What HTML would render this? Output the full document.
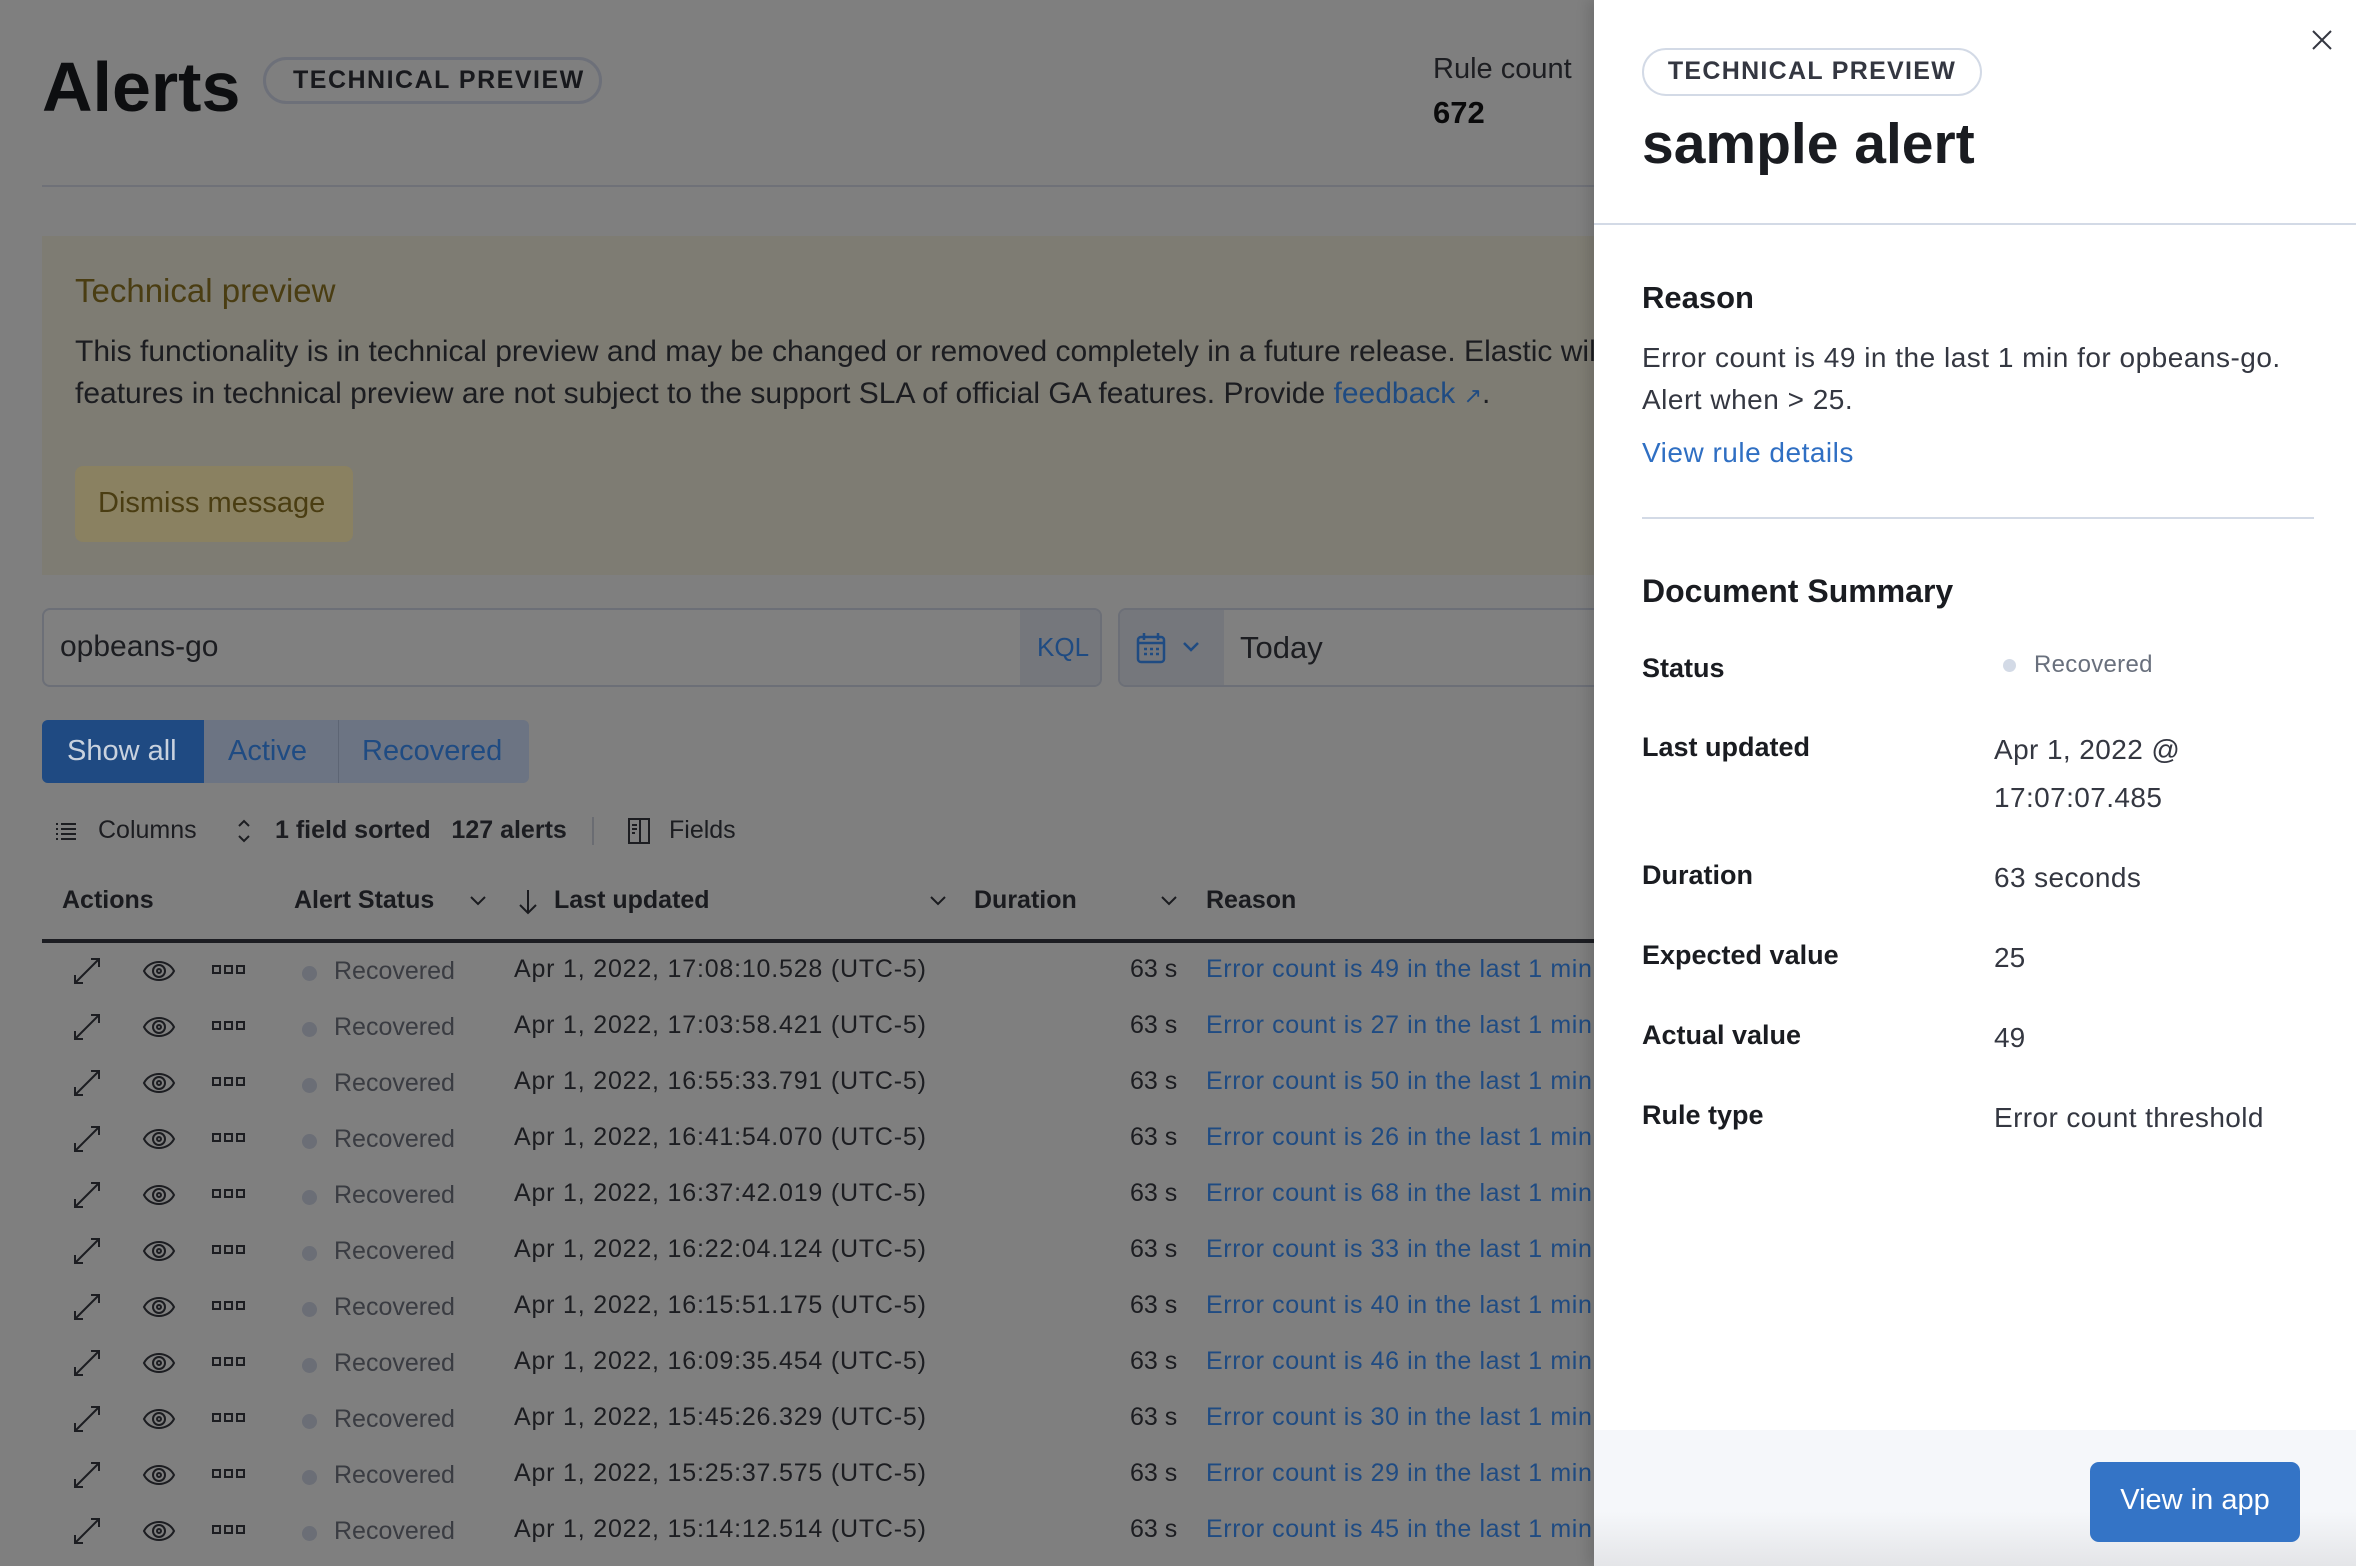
<!DOCTYPE html>
<html><head><meta charset="utf-8">
<style>
*{margin:0;padding:0;box-sizing:border-box}
html,body{width:2356px;height:1566px;overflow:hidden;font-family:"Liberation Sans",sans-serif;background:#7f7f7f}
.t{position:absolute;white-space:nowrap;line-height:1}
#main{position:absolute;left:0;top:0;width:1594px;height:1566px;overflow:hidden;background:#7f7f7f;color:#1a1b1f}
#fly{position:absolute;left:1594px;top:0;width:762px;height:1566px;background:#fff;color:#1a1c21;box-shadow:-6px 0 12px rgba(0,0,0,.12)}
.b{font-weight:bold}
.lnk{color:#1f4b82}
</style></head><body>
<div id="main">
  <div class="t b" style="left:42px;top:52px;font-size:70px;color:#0d0e10;letter-spacing:0px">Alerts</div>
  <div style="position:absolute;left:263px;top:57px;width:339px;height:47px;border:3px solid #6d7079;border-radius:24px"></div>
  <div class="t b" style="left:293px;top:68px;font-size:25px;letter-spacing:1.5px;color:#18191d">TECHNICAL PREVIEW</div>
  <div class="t" style="left:1433px;top:55px;font-size:29px;color:#1d1e22">Rule count</div>
  <div class="t b" style="left:1433px;top:97px;font-size:31px;color:#0a0a0b">672</div>
  <div style="position:absolute;left:42px;top:185px;width:1560px;height:2px;background:#6f7178"></div>

  <div style="position:absolute;left:42px;top:236px;width:1560px;height:339px;background:#7e7c73"></div>
  <div class="t" style="left:75px;top:274px;font-size:33px;color:#4a3d12">Technical preview</div>
  <div class="t" style="left:75px;top:337px;font-size:30px;color:#1c1d21">This functionality is in technical preview and may be changed or removed completely in a future release. Elastic will</div>
  <div class="t" style="left:75px;top:379px;font-size:30px;color:#1c1d21">features in technical preview are not subject to the support SLA of official GA features. Provide <span class="lnk">feedback</span> <span class="lnk" style="font-size:22px">&#x2197;</span>.</div>
  <div style="position:absolute;left:75px;top:466px;width:278px;height:76px;background:#8a8161;border-radius:8px"></div>
  <div class="t" style="left:98px;top:489px;font-size:29px;color:#4a3d12">Dismiss message</div>

  <div style="position:absolute;left:42px;top:608px;width:1060px;height:79px;border:2px solid #6c6f77;border-radius:8px;background:#808080;overflow:hidden">
    <div style="position:absolute;right:0;top:0;width:80px;height:100%;background:#75777c"></div>
  </div>
  <div class="t" style="left:60px;top:632px;font-size:30px;color:#1c1d21">opbeans-go</div>
  <div class="t" style="left:1037px;top:634px;font-size:26px;color:#1f4b82">KQL</div>
  <div style="position:absolute;left:1118px;top:608px;width:500px;height:79px;border:2px solid #6c6f77;border-radius:8px;background:#808080;overflow:hidden">
    <div style="position:absolute;left:0;top:0;width:104px;height:100%;background:#75777c"></div>
  </div>
  <svg style="position:absolute;left:1136px;top:632px" width="30" height="32" viewBox="0 0 30 32" fill="none" stroke="#1f4b82" stroke-width="2.5"><rect x="2" y="5" width="26" height="25" rx="3"/><path d="M8 1v7M22 1v7M2 11h26"/><path d="M8 17h3M14 17h3M20 17h3M8 22h3M14 22h3M20 22h3" stroke-width="2.5"/></svg>
  <svg style="position:absolute;left:1182px;top:641px" width="18" height="12" viewBox="0 0 18 12" fill="none" stroke="#1f4b82" stroke-width="2.5"><path d="M2 2l7 7 7-7"/></svg>
  <div class="t" style="left:1240px;top:632px;font-size:31px;color:#1c1d21">Today</div>

  <div style="position:absolute;left:42px;top:720px;width:487px;height:63px;border-radius:6px;background:#6c7483;overflow:hidden">
    <div style="position:absolute;left:0;top:0;width:162px;height:100%;background:#1f4a82"></div>
    <div style="position:absolute;left:296px;top:0;width:1px;height:100%;background:#5d6574"></div>
  </div>
  <div class="t" style="left:67px;top:737px;font-size:29px;color:#c9d2de">Show all</div>
  <div class="t" style="left:228px;top:737px;font-size:29px;color:#1f4b82">Active</div>
  <div class="t" style="left:362px;top:737px;font-size:29px;color:#1f4b82">Recovered</div>

  <svg style="position:absolute;left:56px;top:822px" width="22" height="20" viewBox="0 0 22 20" fill="#1c1d21"><rect x="0" y="1" width="2" height="2"/><rect x="5" y="1" width="15" height="2"/><rect x="0" y="6" width="2" height="2"/><rect x="5" y="6" width="15" height="2"/><rect x="0" y="11" width="2" height="2"/><rect x="5" y="11" width="15" height="2"/><rect x="0" y="16" width="2" height="2"/><rect x="5" y="16" width="15" height="2"/></svg>
  <div class="t" style="left:98px;top:818px;font-size:25px;color:#1c1d21">Columns</div>
  <svg style="position:absolute;left:236px;top:818px" width="16" height="26" viewBox="0 0 16 26" fill="none" stroke="#1c1d21" stroke-width="2"><path d="M3 8l5-5 5 5M3 18l5 5 5-5"/></svg>
  <div class="t b" style="left:275px;top:818px;font-size:25px;color:#1c1d21">1 field sorted&nbsp;&nbsp;&nbsp;127 alerts</div>
  <div style="position:absolute;left:592px;top:817px;width:2px;height:28px;background:#6a6c72"></div>
  <svg style="position:absolute;left:628px;top:818px" width="22" height="26" viewBox="0 0 22 26" fill="none" stroke="#1c1d21" stroke-width="2"><rect x="1" y="1" width="20" height="24"/><path d="M12 1v24M4 7h5M4 11h5M4 15h3"/></svg>
  <div class="t" style="left:669px;top:818px;font-size:25px;color:#1c1d21">Fields</div>

  <div class="t b" style="left:62px;top:888px;font-size:25px;color:#1a1b1f">Actions</div>
  <div class="t b" style="left:294px;top:888px;font-size:25px;color:#1a1b1f">Alert Status</div>
  <svg style="position:absolute;left:469px;top:895px" width="18" height="12" viewBox="0 0 18 12" fill="none" stroke="#1a1b1f" stroke-width="2"><path d="M2 2l7 7 7-7"/></svg>
  <svg style="position:absolute;left:518px;top:888px" width="20" height="28" viewBox="0 0 20 28" fill="none" stroke="#1a1b1f" stroke-width="2"><path d="M10 2v23M2 17l8 8 8-8"/></svg>
  <div class="t b" style="left:554px;top:888px;font-size:25px;color:#1a1b1f">Last updated</div>
  <svg style="position:absolute;left:929px;top:895px" width="18" height="12" viewBox="0 0 18 12" fill="none" stroke="#1a1b1f" stroke-width="2"><path d="M2 2l7 7 7-7"/></svg>
  <div class="t b" style="left:974px;top:888px;font-size:25px;color:#1a1b1f">Duration</div>
  <svg style="position:absolute;left:1160px;top:895px" width="18" height="12" viewBox="0 0 18 12" fill="none" stroke="#1a1b1f" stroke-width="2"><path d="M2 2l7 7 7-7"/></svg>
  <div class="t b" style="left:1206px;top:888px;font-size:25px;color:#1a1b1f">Reason</div>
  <div style="position:absolute;left:42px;top:939px;width:1560px;height:4px;background:#1c1d22"></div>

  <div id="rows"></div>
</div>

<div id="fly">
  <svg style="position:absolute;left:718px;top:30px" width="20" height="20" viewBox="0 0 20 20" stroke="#343741" stroke-width="2"><path d="M1 1l18 18M19 1L1 19"/></svg>
  <div style="position:absolute;left:48px;top:48px;width:340px;height:48px;border:2px solid #d3dae6;border-radius:24px"></div>
  <div class="t b" style="left:48px;top:59px;width:340px;text-align:center;font-size:25px;letter-spacing:1.3px;color:#343741">TECHNICAL PREVIEW</div>
  <div class="t b" style="left:48px;top:116px;font-size:57px;color:#1a1c21">sample alert</div>
  <div style="position:absolute;left:0;top:223px;width:762px;height:2px;background:#d3dae6"></div>

  <div class="t b" style="left:48px;top:282px;font-size:31px">Reason</div>
  <div class="t" style="left:48px;top:344px;font-size:28px;letter-spacing:0.5px;color:#343741">Error count is 49 in the last 1 min for opbeans-go.</div>
  <div class="t" style="left:48px;top:386px;font-size:28px;letter-spacing:0.5px;color:#343741">Alert when &gt; 25.</div>
  <div class="t" style="left:48px;top:439px;font-size:28px;letter-spacing:0.5px;color:#2f6fc3">View rule details</div>
  <div style="position:absolute;left:48px;top:517px;width:672px;height:2px;background:#d3dae6"></div>

  <div class="t b" style="left:48px;top:575px;font-size:32px">Document Summary</div>
  <div class="t b" style="left:48px;top:655px;font-size:27px">Status</div>
  <div style="position:absolute;left:409px;top:659px;width:13px;height:13px;border-radius:50%;background:#d3dae6"></div>
  <div class="t" style="left:440px;top:653px;font-size:24px;letter-spacing:0.3px;color:#69707d">Recovered</div>
  <div class="t b" style="left:48px;top:734px;font-size:27px">Last updated</div>
  <div class="t" style="left:400px;top:736px;font-size:28px;letter-spacing:0.4px;color:#343741">Apr 1, 2022 @</div>
  <div class="t" style="left:400px;top:784px;font-size:28px;letter-spacing:0.4px;color:#343741">17:07:07.485</div>
  <div class="t b" style="left:48px;top:862px;font-size:27px">Duration</div>
  <div class="t" style="left:400px;top:864px;font-size:28px;letter-spacing:0.4px;color:#343741">63 seconds</div>
  <div class="t b" style="left:48px;top:942px;font-size:27px">Expected value</div>
  <div class="t" style="left:400px;top:944px;font-size:28px;color:#343741">25</div>
  <div class="t b" style="left:48px;top:1022px;font-size:27px">Actual value</div>
  <div class="t" style="left:400px;top:1024px;font-size:28px;color:#343741">49</div>
  <div class="t b" style="left:48px;top:1102px;font-size:27px">Rule type</div>
  <div class="t" style="left:400px;top:1104px;font-size:28px;letter-spacing:0.4px;color:#343741">Error count threshold</div>

  <div style="position:absolute;left:0;top:1430px;width:762px;height:136px;background:linear-gradient(#f5f7fa 60%,#e4e5e8)"></div>
  <div style="position:absolute;left:496px;top:1462px;width:210px;height:80px;background:#3474c6;border-radius:9px"></div>
  <div class="t" style="left:496px;top:1486px;width:210px;text-align:center;font-size:29px;color:#fff">View in app</div>
</div>

<script>
var d=[["17:08:10.528",49],["17:03:58.421",27],["16:55:33.791",50],["16:41:54.070",26],["16:37:42.019",68],["16:22:04.124",33],["16:15:51.175",40],["16:09:35.454",46],["15:45:26.329",30],["15:25:37.575",29],["15:14:12.514",45]];
var h="";
for(var i=0;i<d.length;i++){
 var c=971+56*i;
 h+='<svg style="position:absolute;left:72px;top:'+(c-15)+'px" width="30" height="30" viewBox="0 0 30 30" fill="none" stroke="#1c1d21" stroke-width="2"><path d="M3 27L27 3M19 3h8v8M3 19v8h8"/></svg>';
 h+='<svg style="position:absolute;left:142px;top:'+(c-15)+'px" width="34" height="30" viewBox="0 0 34 30" fill="none" stroke="#1c1d21" stroke-width="2"><path d="M2 15C8 3 26 3 32 15C26 27 8 27 2 15Z"/><circle cx="17" cy="15" r="6"/><circle cx="17" cy="15" r="2"/></svg>';
 h+='<svg style="position:absolute;left:212px;top:'+(c-6)+'px" width="34" height="10" viewBox="0 0 34 10" fill="none" stroke="#1c1d21" stroke-width="2"><rect x="1" y="1" width="7" height="7"/><rect x="13" y="1" width="7" height="7"/><rect x="25" y="1" width="7" height="7"/></svg>';
 h+='<div style="position:absolute;left:302px;top:'+(c-5)+'px;width:15px;height:15px;border-radius:50%;background:#6b6e76"></div>';
 h+='<div class="t" style="left:334px;top:'+(c-12)+'px;font-size:25px;color:#3a3c42">Recovered</div>';
 h+='<div class="t" style="left:514px;top:'+(c-14)+'px;font-size:25px;color:#1c1d21;letter-spacing:0.8px">Apr 1, 2022, '+d[i][0]+' (UTC-5)</div>';
 h+='<div class="t" style="left:1130px;top:'+(c-14)+'px;font-size:25px;color:#1c1d21">63 s</div>';
 h+='<div class="t" style="left:1206px;top:'+(c-14)+'px;font-size:25px;color:#1f4b82;letter-spacing:0.6px">Error count is '+d[i][1]+' in the last 1 min for opbeans-go</div>';
}
document.getElementById("rows").innerHTML=h;
</script>
</body></html>
